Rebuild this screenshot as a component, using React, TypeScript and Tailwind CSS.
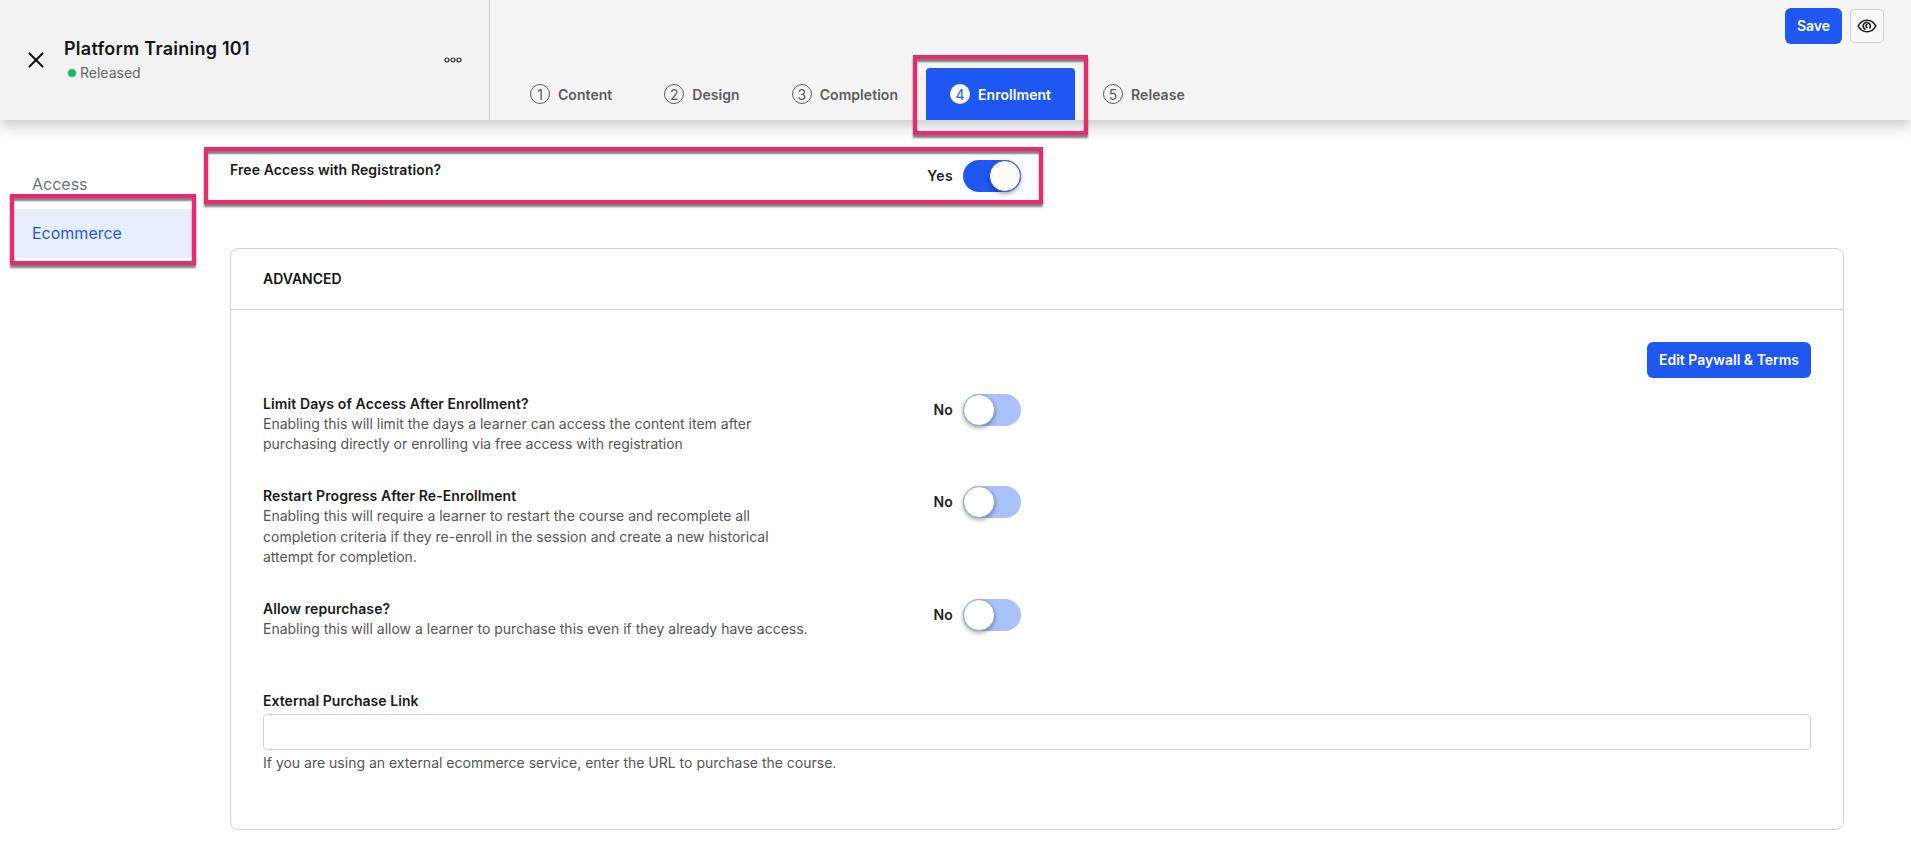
import { X } from "lucide-react";

const steps = [
  { n: 1, label: "Content" },
  { n: 2, label: "Design" },
  { n: 3, label: "Completion" },
  { n: 4, label: "Enrollment", active: true },
  { n: 5, label: "Release" },
];

function Toggle({ on }: { on?: boolean }) {
  return (
    <div className={`flex h-8 w-[58px] rounded-full ${on ? "justify-end bg-[#1f57f3]" : "justify-start bg-[#aac1f9]"}`}>
      <div
        className={`h-8 w-8 rounded-full border bg-white shadow-[0_2px_4px_rgba(0,0,0,0.35)] ${on ? "border-[#1f57f3]" : "border-[#8fa6dd]"}`}
      />
    </div>
  );
}

function SettingRow({ title, desc, value }: { title: string; desc: string; value: string }) {
  return (
    <div className="flex w-[758px] justify-between">
      <div className="w-[550px]">
        <div className="text-[14px] font-semibold leading-5 tracking-[0.1px] text-[#1a1a1a]">{title}</div>
        <p className="text-[14px] leading-[20.4px] text-[#555]">{desc}</p>
      </div>
      <div className="flex h-8 items-center gap-[10px]">
        <span className="pb-px text-[14px] font-semibold tracking-[0.2px] text-[#222]">{value}</span>
        <Toggle />
      </div>
    </div>
  );
}

function Highlight({ className }: { className: string }) {
  return (
    <div
      className={`pointer-events-none absolute border-[4px] border-[#e92a6e] shadow-[0_3px_2px_rgba(0,0,0,0.5),inset_0_3px_2px_rgba(0,0,0,0.5)] ${className}`}
    />
  );
}

export default function App() {
  return (
    <div className="relative h-[849px] w-[1911px] overflow-hidden bg-white font-['Inter',sans-serif]">
      {/* Top bar */}
      <header className="relative z-10 flex h-[120px] shadow-[0_4px_16px_rgba(0,0,0,0.26)]">
        <div className="flex w-[490px] items-center border-r border-[#d0d0d0] bg-[#f2f2f2]">
          <X className="ml-[23px] h-[26px] w-[26px] text-[#111]" strokeWidth={1.8} />
          <div className="ml-[15px] flex-1">
            <div className="text-[18px] font-semibold leading-6 tracking-[0.25px] text-[#151515]">Platform Training 101</div>
            <div className="mt-[2px] flex items-center pl-[4px] text-[14px] leading-5 text-[#666]">
              <span className="mr-1 h-2 w-2 rounded-full bg-[#0fc15a]" />
              Released
            </div>
          </div>
          <svg className="mr-[27px]" width="18" height="6" viewBox="0 0 18 6" fill="none" stroke="#222" strokeWidth="1.2">
            <circle cx="3" cy="3" r="2" />
            <circle cx="9" cy="3" r="2" />
            <circle cx="15" cy="3" r="2" />
          </svg>
        </div>
        <div className="flex flex-1 flex-col bg-[#f5f5f5]">
          <div className="flex items-start justify-end gap-2 pr-[27px] pt-2">
            <button className="h-9 w-[57px] rounded-md bg-[#1f57f3] pb-px text-[14px] font-semibold text-white">Save</button>
            <button className="mt-px flex h-[34px] w-[34px] items-center justify-center rounded border border-[#d0d0d0] bg-[#f8f8f8]">
              <svg width="20" height="20" viewBox="0 0 20 20" fill="none" stroke="#1a1a1a" strokeWidth="1.6">
                <path d="M1.2 10C3.2 6.2 6.2 4.2 10 4.2S16.800 6.200 18.800 10C16.800 13.800 13.800 15.800 10 15.800S3.200 13.800 1.200 10Z" />
                <path d="M8 13.200A3.600 3.600 0 1 1 12.800 12" strokeLinecap="round" />
                <path d="M10 8.400A1.700 1.700 0 0 0 10 11.600" strokeLinecap="round" />
              </svg>
            </button>
          </div>
          <nav className="mt-6 flex h-[52px] gap-1 pl-4">
            {steps.map((s) => (
              <div
                key={s.n}
                className={`flex items-center gap-2 rounded-t px-6 text-[14px] font-semibold tracking-[0.05px] ${s.active ? "bg-[#1f57f3] text-white" : "text-[#5c5c5c]"}`}
              >
                <span
                  className={`flex h-5 w-5 items-center justify-center rounded-full text-[14px] font-normal ${s.active ? "bg-white text-[#1f57f3]" : "border-[1.5px] border-[#5c5c5c] text-[#5c5c5c]"}`}
                >
                  {s.n}
                </span>
                {s.label}
              </div>
            ))}
          </nav>
        </div>
      </header>

      {/* Body */}
      <div className="flex pt-10">
        <aside className="ml-[14px] w-[178px] text-[16px]">
          <div className="flex h-[49px] items-center px-[18px] pb-px text-[#6b7280]">Access</div>
          <div className="flex h-[49px] items-center bg-[#e8effc] px-[18px] pb-px text-[#1f57f3]">Ecommerce</div>
        </aside>

        <main className="ml-[38px] w-[1614px]">
          <div className="flex w-[791px] justify-between">
            <div className="text-[14px] font-semibold leading-5 tracking-[0.1px] text-[#1a1a1a]">Free Access with Registration?</div>
            <div className="flex h-8 items-center gap-[10px]">
              <span className="pb-px text-[14px] font-semibold tracking-[0.4px] text-[#222]">Yes</span>
              <Toggle on />
            </div>
          </div>

          <section className="mt-14 h-[582px] rounded-lg border border-[#cfd3d9]">
            <div className="flex h-[61px] items-center border-b border-[#cfd3d9] px-8 pb-px text-[14px] font-semibold text-[#111]">
              ADVANCED
            </div>
            <div className="px-8 pt-8">
              <div className="flex justify-end">
                <button className="h-9 w-[164px] rounded-md bg-[#1f57f3] pb-px text-[14px] font-semibold text-white">
                  Edit Paywall &amp; Terms
                </button>
              </div>
              <div className="mt-4 flex flex-col gap-[31.5px]">
                <SettingRow
                  title="Limit Days of Access After Enrollment?"
                  desc="Enabling this will limit the days a learner can access the content item after purchasing directly or enrolling via free access with registration"
                  value="No"
                />
                <SettingRow
                  title="Restart Progress After Re-Enrollment"
                  desc="Enabling this will require a learner to restart the course and recomplete all completion criteria if they re-enroll in the session and create a new historical attempt for completion."
                  value="No"
                />
                <SettingRow
                  title="Allow repurchase?"
                  desc="Enabling this will allow a learner to purchase this even if they already have access."
                  value="No"
                />
              </div>
              <div className="mt-[52px]">
                <label className="block text-[14px] font-semibold leading-5 tracking-[0.05px] text-[#1a1a1a]">External Purchase Link</label>
                <input className="mt-[3px] block h-9 w-full rounded border border-[#cfd3d9] bg-white" />
                <p className="mt-[3px] text-[14px] leading-5 text-[#555]">
                  If you are using an external ecommerce service, enter the URL to purchase the course.
                </p>
              </div>
            </div>
          </section>
        </main>
      </div>

      {/* Review highlights */}
      <Highlight className="left-[913px] top-[55px] z-20 h-[80px] w-[175px]" />
      <Highlight className="left-[204px] top-[147px] z-20 h-[57px] w-[839px]" />
      <Highlight className="left-[10px] top-[194px] z-20 h-[71px] w-[186px]" />
    </div>
  );
}
